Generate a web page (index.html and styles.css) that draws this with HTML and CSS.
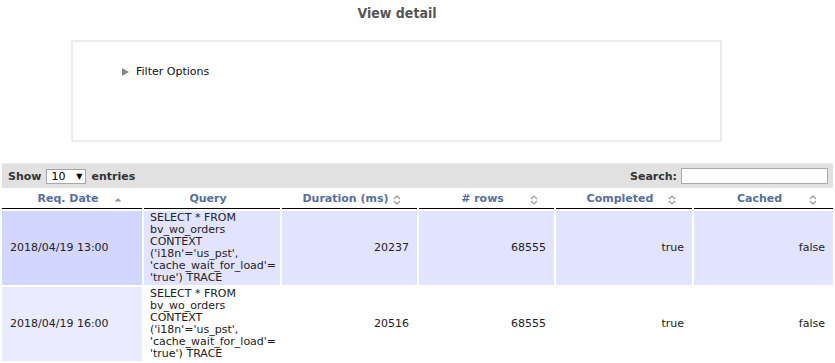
FILE: index.html
```html
<!DOCTYPE html>
<html lang="en">
<head>
    <meta charset="UTF-8">
    <title>View detail</title>
    <link rel="stylesheet" href="styles.css">
</head>
<body>

<div class="top">
    <h1 class="page-title">View detail</h1>

    <div class="filter-box">
        <div class="filter-toggle">
            <span class="arrow"></span>
            <span>Filter Options</span>
        </div>
    </div>
</div>

<div class="table-wrapper">
    <div class="toolbar">
        <div class="length">
            Show
            <span class="fake-select">10 <span class="caret">&#9660;</span></span>
            entries
        </div>
        <div class="search">
            Search: <input type="text" class="search-input">
        </div>
    </div>

    <table class="display">
        <thead>
            <tr>
                <th class="col-date">Req. Date
                    <svg class="sort" width="8" height="10" viewBox="0 0 8 10"><path d="M0.5 6.5 L4 3 L7.5 6.5 Z" fill="#999"/></svg>
                </th>
                <th class="col-query">Query</th>
                <th class="col-dur">Duration (ms)
                    <svg class="sort" width="8" height="10" viewBox="0 0 8 10"><path d="M1 4 L4 1 L7 4 M1 6 L4 9 L7 6" fill="none" stroke="#999" stroke-width="1.2"/></svg>
                </th>
                <th class="col-rows"># rows
                    <svg class="sort" width="8" height="10" viewBox="0 0 8 10"><path d="M1 4 L4 1 L7 4 M1 6 L4 9 L7 6" fill="none" stroke="#999" stroke-width="1.2"/></svg>
                </th>
                <th class="col-comp">Completed
                    <svg class="sort" width="8" height="10" viewBox="0 0 8 10"><path d="M1 4 L4 1 L7 4 M1 6 L4 9 L7 6" fill="none" stroke="#999" stroke-width="1.2"/></svg>
                </th>
                <th class="col-cache">Cached
                    <svg class="sort" width="8" height="10" viewBox="0 0 8 10"><path d="M1 4 L4 1 L7 4 M1 6 L4 9 L7 6" fill="none" stroke="#999" stroke-width="1.2"/></svg>
                </th>
            </tr>
        </thead>
        <tbody>
            <tr class="odd">
                <td class="sorting_1">2018/04/19 13:00</td>
                <td class="query">SELECT * FROM<br>bv_wo_orders<br>CONTEXT<br>('i18n'='us_pst',<br>'cache_wait_for_load'=<br>'true') TRACE</td>
                <td class="num">20237</td>
                <td class="num">68555</td>
                <td class="num">true</td>
                <td class="num">false</td>
            </tr>
            <tr class="even">
                <td class="sorting_1">2018/04/19 16:00</td>
                <td class="query">SELECT * FROM<br>bv_wo_orders<br>CONTEXT<br>('i18n'='us_pst',<br>'cache_wait_for_load'=<br>'true') TRACE</td>
                <td class="num">20516</td>
                <td class="num">68555</td>
                <td class="num">true</td>
                <td class="num">false</td>
            </tr>
        </tbody>
    </table>
</div>

</body>
</html>
```

FILE: styles.css
```css
body {
    margin: 0;
    font-family: "DejaVu Sans", Verdana, sans-serif;
    font-size: 11px;
    color: #222;
}

.top {
    width: 794px;
}

.page-title {
    margin: 4px 0 0;
    text-align: center;
    font-family: "DejaVu Sans Condensed", "DejaVu Sans", sans-serif;
    font-stretch: condensed;
    font-size: 14px;
    line-height: 18px;
    color: #555;
}

.filter-box {
    margin: 18px 0 0 71px;
    width: 647px;
    height: 98px;
    border: 2px solid #ebebeb;
}

.filter-toggle {
    display: flex;
    align-items: center;
    gap: 7px;
    margin: 23px 0 0 49px;
    color: #111;
}

.filter-toggle .arrow {
    width: 0;
    height: 0;
    border-top: 4px solid transparent;
    border-bottom: 4px solid transparent;
    border-left: 7px solid #8b8589;
}

.table-wrapper {
    margin-top: 21px;
}

/* toolbar above the table */
.toolbar {
    margin: 0 2px;
    height: 24px;
    display: flex;
    align-items: center;
    justify-content: space-between;
    background-color: #e1e1e1;
    border-top: 1px solid #ececec;
    font-weight: bold;
    color: #333;
}

.length {
    padding-left: 6px;
    display: flex;
    align-items: center;
    gap: 5px;
}

.fake-select {
    display: inline-flex;
    justify-content: space-between;
    align-items: center;
    box-sizing: border-box;
    width: 40px;
    height: 15px;
    padding: 0 3px 0 4px;
    background: white;
    border: 1px solid #a6a6a6;
    font-weight: normal;
    color: #000;
    line-height: 13px;
}

.fake-select .caret {
    font-size: 8px;
}

.search {
    padding-right: 5px;
    display: flex;
    align-items: center;
    gap: 4px;
}

.search-input {
    box-sizing: border-box;
    width: 147px;
    height: 16px;
    margin: 0;
    border: 1px solid #aaa;
    padding: 0 2px;
}

table.display {
    width: 100%;
    border-collapse: separate;
    border-spacing: 2px;
    table-layout: fixed;
}

table.display th {
    position: relative;
    box-sizing: border-box;
    background: white;
    padding: 3px 18px 3px 10px;
    line-height: 12px;
    border-bottom: 1px solid #000;
    font-weight: bold;
    color: #566f9f;
    text-align: center;
}

table.display th .sort {
    position: absolute;
    top: 5px;
    right: 16px;
}

table.display th.col-date .sort {
    right: 20px;
}

.col-date { width: 140px; }
.col-query { width: 136px; }
.col-dur { width: 135px; }
.col-rows { width: 135px; }
.col-comp { width: 136px; }
.col-cache { width: 139px; }

table.display td {
    padding: 1px 8px;
    line-height: 12px;
    vertical-align: middle;
}

table.display td.query {
    padding-left: 6px;
}

table.display td.num {
    text-align: right;
}

tr.odd td { background-color: #e2e4ff; }
tr.odd td.sorting_1 { background-color: #d3d6ff; }
tr.even td { background-color: white; }
tr.even td.sorting_1 { background-color: #eaebff; }
```
